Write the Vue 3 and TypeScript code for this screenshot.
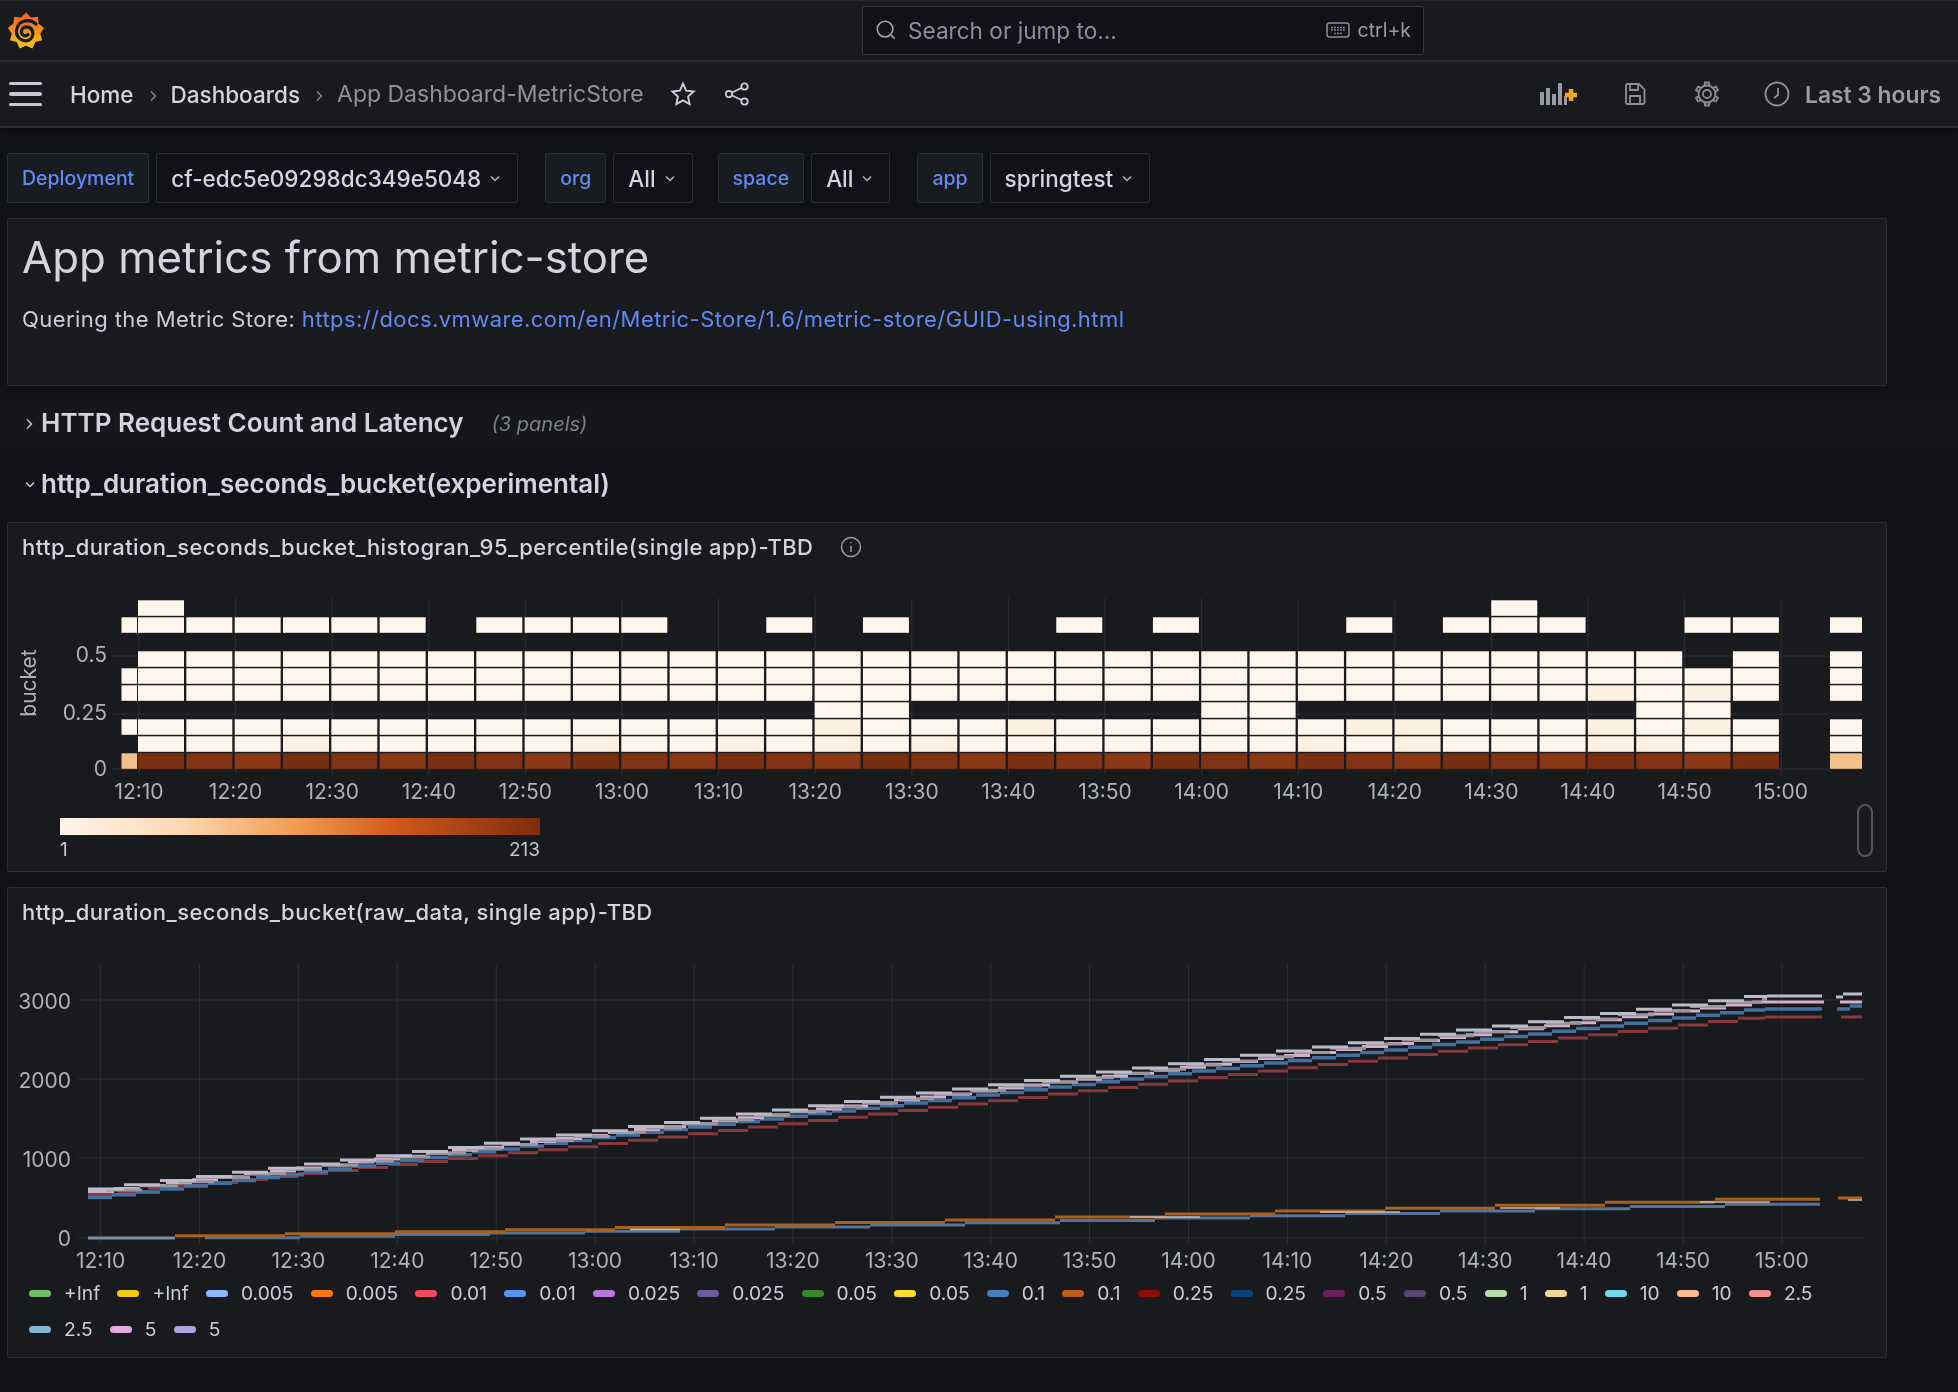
<script setup lang="ts">
const colX = (k: number) => 138 + 48.33 * k

type Cell = { x: number; y: number; w: number; fill: string }

const range = (a: number, b: number) => Array.from({ length: b - a + 1 }, (_, i) => a + i)
const all = range(0, 33)

// bucket row -> columns that have data, -1 is the clipped first column, 35 the clipped last one
const rows: Record<number, number[]> = {
  0: [-1, ...all, 35],
  1: [...all, 35],
  2: [-1, ...all, 35],
  3: [14, 15, 22, 23, 31, 32],
  4: [-1, ...all, 35],
  5: [-1, ...all, 35],
  6: [...range(0, 31), 33, 35],
  8: [-1, ...range(0, 5), ...range(7, 10), 13, 15, 19, 21, 25, 27, 28, 29, 32, 33, 35],
  9: [0, 28],
}

const browns = ['#7d3011', '#843312', '#8c3816', '#763010', '#803212', '#8a3715']
const tinted = new Set(['1:3', '1:9', '1:12', '1:14', '1:16', '1:24', '1:26', '1:30', '1:31', '2:14', '2:18', '2:25', '2:26', '2:30', '2:32', '4:30', '4:32'])

const cells: Cell[] = []
for (const [r, cols] of Object.entries(rows)) {
  const row = Number(r)
  for (const c of cols) {
    let x = colX(c)
    let w = 46
    if (c === -1) { x = 121.5; w = 15.5 }
    if (c === 35) { x = 1830; w = 32 }
    let fill = tinted.has(`${row}:${c}`) ? '#fcf0e1' : '#fdf6ec'
    if (row === 0) fill = c === -1 || c === 35 ? '#f2c08a' : browns[(c + 6) % browns.length]
    cells.push({ x, y: 753.3 - row * 17, w, fill })
  }
}

const labels = (start: number, n: number) =>
  Array.from({ length: n }, (_, i) => {
    const m = start + i * 10
    return `${Math.floor(m / 60)}:${String(m % 60).padStart(2, '0')}`
  })

const heatTicks = labels(730, 18).map((text, i) => ({ text, x: 139 + i * 96.6 }))
const lineTicks = labels(730, 18).map((text, i) => ({ text, x: 100.6 + i * 98.9 }))

type Pt = [number, number]

// the samples show as short flat dashes climbing along a polyline
function dashes(pts: Pt[], step: number, phase = 0) {
  const first = pts[0][0]
  const last = pts[pts.length - 1][0]
  const at = (x: number) => {
    for (let i = 1; i < pts.length; i++) {
      if (x <= pts[i][0]) {
        const [x0, y0] = pts[i - 1]
        const [x1, y1] = pts[i]
        return y0 + ((y1 - y0) * (x - x0)) / (x1 - x0)
      }
    }
    return pts[pts.length - 1][1]
  }
  let d = ''
  for (let x = first + phase; x < last; x += step) {
    const end = Math.min(x + step, last)
    d += `M${x.toFixed(1)} ${at(x + step / 2).toFixed(1)}H${end.toFixed(1)}`
  }
  return d
}

const lines = [
  { color: '#86393f', w: 3, d: dashes([[88, 1196], [600, 1145], [1765, 1017]], 30) + 'M1765 1017H1822M1841 1017H1862' },
  { color: '#44709f', w: 3.5, d: dashes([[88, 1199], [600, 1138], [1765, 1009]], 24) + 'M1765 1009H1822M1837 1009H1850M1850 1006H1862' },
  { color: '#d3aecd', w: 3, d: dashes([[88, 1193], [600, 1135], [1765, 1002]], 26) + 'M1765 1002H1824M1840 1002H1862' },
  { color: '#99969f', w: 3, d: dashes([[88, 1194], [600, 1135.5], [1767, 999.5]], 36, 18) },
  { color: '#bebbc9', w: 3, d: dashes([[88, 1191], [600, 1132], [1767, 996]], 36) + 'M1767 996H1822M1836 997H1843M1843 994H1862' },
  { color: '#7a8ba6', w: 3, d: 'M88 1238H175' },
  { color: '#56739a', w: 3, d: dashes([[175, 1239], [600, 1232], [1000, 1223], [1820, 1203]], 95, 30) },
  { color: '#a8621f', w: 3, d: dashes([[175, 1236.7], [600, 1229], [1000, 1220], [1820, 1198]], 110) + 'M1838 1198H1862' },
  { color: '#c6bfb8', w: 1.5, d: 'M630 1229.500H680M1130 1217H1200M1320 1212H1400M1500 1208H1560M1700 1202H1770M1848 1200H1862' },
]

const legend: [string, string][] = [
  ['+Inf', '#73bf69'], ['+Inf', '#f2cc0c'], ['0.005', '#8ab8ff'], ['0.005', '#ff780a'],
  ['0.01', '#f2495c'], ['0.01', '#5794f2'], ['0.025', '#b877d9'], ['0.025', '#705da0'],
  ['0.05', '#37872d'], ['0.05', '#fade2a'], ['0.1', '#447ebc'], ['0.1', '#c15c17'],
  ['0.25', '#890f02'], ['0.25', '#0a437c'], ['0.5', '#6d1f62'], ['0.5', '#584477'],
  ['1', '#b7dbab'], ['1', '#f4d598'], ['10', '#70dbed'], ['10', '#f9ba8f'],
  ['2.5', '#f29191'], ['2.5', '#82b5d8'], ['5', '#e5a8e2'], ['5', '#aea2e0'],
]

const sun = Array.from({ length: 18 }, (_, i) => {
  const a = (i / 18) * Math.PI * 2 - Math.PI / 2
  const r = i % 2 === 0 ? 18.5 : 14.5
  return `${(18 + r * Math.cos(a)).toFixed(1)},${(19 + r * Math.sin(a)).toFixed(1)}`
}).join(' ')

const gearTeeth = [0, 60, 120, 180, 240, 300]

const variables = [
  { label: 'Deployment', value: 'cf-edc5e09298dc349e5048', gap: 'gap-md' },
  { label: 'org', value: 'All', gap: 'gap-sm' },
  { label: 'space', value: 'All', gap: 'gap-md' },
  { label: 'app', value: 'springtest', gap: '' },
]
</script>

<template>
  <div class="page">
    <header class="topbar">
      <svg class="logo" viewBox="0 0 36 38" width="36" height="38">
        <defs>
          <linearGradient id="sunfill" x1="0.5" y1="0" x2="0.5" y2="1">
            <stop offset="0" stop-color="#f05a28" />
            <stop offset="1" stop-color="#fbca0a" />
          </linearGradient>
        </defs>
        <polygon :points="sun" fill="url(#sunfill)" />
        <circle cx="18" cy="19" r="12" fill="url(#sunfill)" />
        <path d="M28 12C22 6 10 8 8.500 18.500C8 26 15 30.500 21 28C26 25.500 26 18 21.500 15.500C17 13.500 13 16.500 13.500 20.500C14 23.500 18 25 20 22.500" fill="none" stroke="#181b1f" stroke-width="3.200" stroke-linecap="round" />
      </svg>
      <div class="search">
        <svg class="search-icon" viewBox="0 0 24 24" width="24" height="24">
          <circle cx="11" cy="11" r="8.500" />
          <path d="M17.500 17.500L21.500 21.500" />
        </svg>
        <span class="search-text">Search or jump to...</span>
        <svg class="kbd-icon" viewBox="0 0 24 16" width="24" height="16">
          <rect x="1" y="1" width="22" height="14" rx="2.500" />
          <path d="M5 5.500H19M5 8H19M8 11.500H16" stroke-dasharray="1.800 1.200" />
        </svg>
        <span class="search-key">ctrl+k</span>
      </div>
    </header>

    <nav class="navbar">
      <div class="burger"><i /><i /><i /></div>
      <span class="crumb">Home</span>
      <svg class="sep" viewBox="0 0 8 12" width="8" height="12"><path d="M2 1.500L6.500 6L2 10.500" /></svg>
      <span class="crumb">Dashboards</span>
      <svg class="sep" viewBox="0 0 8 12" width="8" height="12"><path d="M2 1.500L6.500 6L2 10.500" /></svg>
      <span class="crumb current">App Dashboard-MetricStore</span>
      <svg class="star" viewBox="0 0 24 24" width="26" height="26">
        <path d="M12 2.500L14.900 8.900L21.800 9.700L16.700 14.400L18.100 21.300L12 17.800L5.900 21.300L7.300 14.400L2.200 9.700L9.100 8.900Z" />
      </svg>
      <svg class="share" viewBox="0 0 26 24" width="26" height="24">
        <circle cx="20.500" cy="4.500" r="3.200" />
        <circle cx="5" cy="12" r="3.200" />
        <circle cx="20.500" cy="19.500" r="3.200" />
        <path d="M8 10.500L17.500 6M8 13.500L17.500 18" />
      </svg>
      <div class="nav-right">
        <svg class="tool bars" viewBox="0 0 40 24" width="40" height="24">
          <g fill="#9a9ca5" stroke="none">
            <rect x="0" y="10" width="4" height="13" />
            <rect x="6" y="6" width="4" height="17" />
            <rect x="12" y="12" width="4" height="11" />
            <rect x="18" y="1" width="4" height="22" />
            <rect x="24" y="14" width="3" height="9" />
          </g>
          <path d="M31 7V19M25 13H37" stroke="#f5a623" stroke-width="4.500" fill="none" />
        </svg>
        <svg class="tool save" viewBox="0 0 24 24" width="24" height="24">
          <path d="M3 3.500Q3 2 4.500 2H16L21.500 7.500V20.500Q21.500 22 20 22H4.500Q3 22 3 20.500Z" />
          <path d="M7 2V8H15V2M7 22V14H17V22" />
        </svg>
        <svg class="tool gear" viewBox="0 0 26 26" width="26" height="26">
          <circle cx="13" cy="13" r="4" />
          <circle cx="13" cy="13" r="8.500" />
          <path v-for="a in gearTeeth" :key="a" d="M10.500 4.800L11 1.500H15L15.500 4.800" :transform="`rotate(${a} 13 13)`" />
        </svg>
        <svg class="tool clock" viewBox="0 0 26 26" width="26" height="26">
          <circle cx="13" cy="13" r="11.500" />
          <path d="M14 7V14L10 17" />
        </svg>
        <span class="range">Last 3 hours</span>
      </div>
    </nav>

    <main class="main">
      <section class="variables">
        <template v-for="v in variables" :key="v.label">
          <span class="var-label">{{ v.label }}</span>
          <span class="var-value" :class="v.gap">
            {{ v.value }}
            <svg viewBox="0 0 10 8" width="10" height="8"><path d="M1 1.500L5 5.500L9 1.500" /></svg>
          </span>
        </template>
      </section>

      <section class="panel text-panel">
        <h1>App metrics from metric-store</h1>
        <p>Quering the Metric Store: <a>https://docs.vmware.com/en/Metric-Store/1.6/metric-store/GUID-using.html</a></p>
      </section>
    </main>

    <div class="row-title collapsed">
      <svg viewBox="0 0 8 12" width="8" height="12"><path d="M2 1.500L6.500 6L2 10.500" /></svg>
      <strong>HTTP Request Count and Latency</strong>
      <em>(3 panels)</em>
    </div>
    <div class="row-title">
      <svg viewBox="0 0 10 8" width="10" height="8"><path d="M1 1.500L5 5.500L9 1.500" /></svg>
      <strong>http_duration_seconds_bucket(experimental)</strong>
    </div>

    <div class="charts">
      <section class="panel heat-panel">
        <div class="panel-title">
          http_duration_seconds_bucket_histogran_95_percentile(single app)-TBD
          <svg viewBox="0 0 22 22" width="22" height="22">
            <circle cx="11" cy="11" r="9.500" />
            <path d="M11 10V16M11 6.200V7.200" />
          </svg>
        </div>
        <svg class="chart" viewBox="8 571 1878 240" width="1878" height="240">
          <line v-for="t in heatTicks" :key="t.text" class="grid" :x1="t.x" :x2="t.x" y1="598" y2="775" />
          <line class="grid" x1="112" x2="1862" y1="656" y2="656" />
          <line class="grid" x1="112" x2="1862" y1="714" y2="714" />
          <line class="grid" x1="112" x2="1862" y1="769" y2="769" />
          <rect v-for="(c, i) in cells" :key="i" :x="c.x" :y="c.y" :width="c.w" height="15.500" :fill="c.fill" />
          <text class="tick" x="107" y="662" text-anchor="end">0.5</text>
          <text class="tick" x="107" y="720" text-anchor="end">0.25</text>
          <text class="tick" x="107" y="776" text-anchor="end">0</text>
          <text class="tick" transform="translate(36 683) rotate(-90)" text-anchor="middle">bucket</text>
          <text v-for="t in heatTicks" :key="t.text" class="tick" :x="t.x" y="799" text-anchor="middle">{{ t.text }}</text>
        </svg>
        <div class="scale">
          <div class="scale-bar" />
          <div class="scale-labels"><span>1</span><span>213</span></div>
        </div>
        <div class="scroll-handle" />
      </section>

      <section class="panel line-panel">
        <div class="panel-title">http_duration_seconds_bucket(raw_data, single app)-TBD</div>
        <svg class="chart" viewBox="8 936 1878 337" width="1878" height="337">
          <line v-for="t in lineTicks" :key="t.text" class="grid" :x1="t.x" :x2="t.x" y1="964" y2="1244" />
          <line class="grid" x1="78" x2="1864" y1="1000" y2="1000" />
          <line class="grid" x1="78" x2="1864" y1="1079" y2="1079" />
          <line class="grid" x1="78" x2="1864" y1="1158" y2="1158" />
          <line class="grid" x1="78" x2="1864" y1="1238" y2="1238" />
          <path v-for="(l, i) in lines" :key="i" class="series" :d="l.d" :stroke="l.color" :stroke-width="l.w" />
          <text class="tick" x="71" y="1009" text-anchor="end">3000</text>
          <text class="tick" x="71" y="1088" text-anchor="end">2000</text>
          <text class="tick" x="71" y="1167" text-anchor="end">1000</text>
          <text class="tick" x="71" y="1246" text-anchor="end">0</text>
          <text v-for="t in lineTicks" :key="t.text" class="tick" :x="t.x" y="1268" text-anchor="middle">{{ t.text }}</text>
        </svg>
        <ul class="legend">
          <li v-for="(item, i) in legend" :key="i">
            <i :style="{ background: item[1] }" />{{ item[0] }}
          </li>
        </ul>
      </section>
    </div>
  </div>
</template>

<style>
html, body {
  margin: 0;
  background: #101217;
}
</style>

<style scoped>
.page {
  width: 1958px;
  height: 1392px;
  overflow: hidden;
  background: #101217;
  color: #ccccdc;
  font-family: Inter, "Noto Sans", sans-serif;
  font-size: 21px;
  filter: blur(0.5px);
}

svg { display: block; flex: none; }

.topbar {
  height: 62px;
  box-sizing: border-box;
  background: #191a1e;
  border-top: 1px solid #24262b;
  border-bottom: 2px solid #2e3035;
  display: flex;
  align-items: center;
  padding-left: 8px;
}

.search {
  margin-left: 818px;
  width: 562px;
  height: 49px;
  box-sizing: border-box;
  background: #111217;
  border: 1px solid #34363c;
  border-radius: 2px;
  display: flex;
  align-items: center;
  padding: 0 12px 1px;
  color: #8d8e97;
}
.search-icon { fill: none; stroke: #a4a5ad; stroke-width: 1.800; width: 22px; height: 22px; }
.search-text { margin-left: 11px; font-size: 22.600px; }
.kbd-icon { margin-left: auto; fill: none; stroke: #8d8e97; stroke-width: 1.500; }
.search-key { margin-left: 8px; font-size: 19.500px; color: #9a9ba3; }

.navbar {
  height: 66px;
  box-sizing: border-box;
  background: #191a1e;
  border-bottom: 2px solid #2e3035;
  box-shadow: 0 2px 6px rgba(0, 0, 0, 0.5);
  display: flex;
  align-items: center;
  padding-left: 9px;
}

.burger { width: 33px; display: flex; flex-direction: column; gap: 7px; margin-right: 28px; }
.burger i { height: 3.500px; border-radius: 2px; background: #c9c9d5; }

.crumb { font-weight: 500; font-size: 22.500px; color: #d4d4de; }
.crumb.current { color: #8f9099; font-weight: 400; font-size: 23px; }
.sep { margin: 3px 14px 0 15px; fill: none; stroke: #85868f; stroke-width: 1.500; }

.star { margin-left: 26px; fill: none; stroke: #ccccdc; stroke-width: 1.800; }
.share { margin-left: 28px; fill: none; stroke: #ccccdc; stroke-width: 1.800; }

.nav-right { margin-left: auto; display: flex; align-items: center; padding-right: 17px; }
.tool { fill: none; stroke: #8e8f98; stroke-width: 1.800; }
.save { margin-left: 43px; }
.gear { margin-left: 47px; }
.clock { margin-left: 44px; }
.range { margin-left: 15px; font-weight: 600; font-size: 22.800px; color: #9b9ca5; }

.main { padding: 25px 71px 0 7px; }

.variables { display: flex; height: 50px; gap: 7px; margin-bottom: 15px; }

.var-label, .var-value {
  box-sizing: border-box;
  height: 50px;
  display: flex;
  align-items: center;
  border: 1px solid #2b2d33;
  border-radius: 2px;
}
.var-label { background: #181b1f; color: #6389f5; font-weight: 500; font-size: 19.500px; padding: 0 14px; }
.var-value { background: #111217; color: #d4d4de; padding: 0 17px 0 14px; font-weight: 500; font-size: 22.500px; gap: 9px; }
.var-value svg { fill: none; stroke: #b5b5c0; stroke-width: 1.500; margin-top: 2px; }
.gap-md { margin-right: 20px; }
.gap-sm { margin-right: 18px; }

.panel {
  box-sizing: border-box;
  background: #191a1e;
  border: 1px solid #2b2d33;
  border-radius: 2px;
}

.text-panel { height: 168px; padding: 0 14px; }
.text-panel h1 { margin: 0; padding-top: 8px; font-weight: 400; font-size: 43.800px; line-height: 62px; color: #d4d4de; }
.text-panel p { margin: 15px 0 0; line-height: 30px; font-size: 22px; letter-spacing: 0.430px; color: #ccccdc; }
.text-panel a { color: #6389f5; }

.row-title {
  height: 48px;
  box-sizing: border-box;
  padding: 0 0 3px 25px;
  margin-top: 13px;
  display: flex;
  align-items: center;
}
.row-title svg { fill: none; stroke: #c9c9d5; stroke-width: 1.500; margin-right: 6px; margin-top: 3px; }
.row-title strong { font-weight: 600; font-size: 26px; color: #d4d4de; }
.row-title em { margin-left: 28px; margin-top: 3px; color: #7f8088; font-size: 20px; }
.row-title.collapsed { background: #15171b; margin-top: 14px; }
.row-title.collapsed svg { margin-right: 8px; }

.charts { margin: 13px 71px 0 7px; display: flex; flex-direction: column; gap: 15px; }

.heat-panel { height: 350px; position: relative; }
.line-panel { height: 471px; }

.panel-title {
  height: 48px;
  display: flex;
  align-items: center;
  gap: 27px;
  padding-left: 14px;
  font-weight: 500;
  font-size: 22px;
  letter-spacing: 0.450px;
  color: #d4d4de;
}
.panel-title svg { fill: none; stroke: #9a9ba3; stroke-width: 1.500; }

.grid { stroke: #ccccdc; stroke-opacity: 0.11; stroke-width: 1; }
.tick { fill: #b0b1ba; font-size: 21px; font-family: Inter, "Noto Sans", sans-serif; }
.series { fill: none; }

.scale { width: 480px; margin: 7px 0 0 52px; }
.scale-bar {
  height: 17px;
  background: linear-gradient(90deg, #fff5eb 0%, #fdd9b4 25%, #f09a4f 50%, #d2581b 70%, #a03d12 88%, #7c2d0f 100%);
}
.scale-labels { display: flex; justify-content: space-between; font-size: 19px; line-height: 26px; margin-top: 2px; color: #c4c5cf; }

.scroll-handle {
  position: absolute;
  right: 13px;
  bottom: 14px;
  width: 16px;
  height: 53px;
  box-sizing: border-box;
  border: 2px solid #55565c;
  border-radius: 8px;
}

.legend {
  list-style: none;
  margin: 0;
  padding: 2px 0 0 21px;
  display: flex;
  flex-wrap: wrap;
  column-gap: 17.200px;
  width: 1830px;
  box-sizing: border-box;
}
.legend li { display: flex; align-items: center; height: 36px; font-size: 19.200px; color: #ccccdc; }
.legend i { width: 22px; height: 7px; border-radius: 4px; margin-right: 13px; }
</style>
